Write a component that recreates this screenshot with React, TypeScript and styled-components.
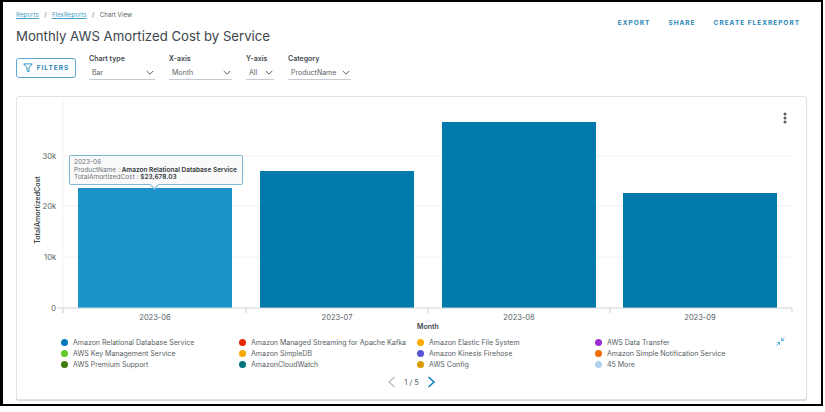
import React from "react"
import styled, { createGlobalStyle } from "styled-components"

const GlobalStyle = createGlobalStyle`
html, body {
    margin: 0;
    padding: 0;
    background: #ffffff;
}
body {
    font-family: Inter, "Liberation Sans", sans-serif;
    color: #444b50;
}
`

const selects = [
    { label: "Chart type", value: "Bar", width: 66 },
    { label: "X-axis", value: "Month", width: 63 },
    { label: "Y-axis", value: "All", width: 28 },
    { label: "Category", value: "ProductName", width: 63 },
]

const legend = [
    { color: "#0079b8", name: "Amazon Relational Database Service" },
    { color: "#e62700", name: "Amazon Managed Streaming for Apache Kafka" },
    { color: "#ffab00", name: "Amazon Elastic File System" },
    { color: "#9b2fce", name: "AWS Data Transfer" },
    { color: "#62c926", name: "AWS Key Management Service" },
    { color: "#f8a900", name: "Amazon SimpleDB" },
    { color: "#5a55d6", name: "Amazon Kinesis Firehose" },
    { color: "#f26a00", name: "Amazon Simple Notification Service" },
    { color: "#3f7a0a", name: "AWS Premium Support" },
    { color: "#00757f", name: "AmazonCloudWatch" },
    { color: "#d99a00", name: "AWS Config" },
    { color: "#b3d1ec", name: "45 More" },
]

const bars = [
    { month: "2023-06", x: 62, top: 91, color: "#1b93c9" },
    { month: "2023-07", x: 244, top: 74, color: "#0079ad" },
    { month: "2023-08", x: 426, top: 25, color: "#0079ad" },
    { month: "2023-09", x: 607, top: 96, color: "#0079ad" },
]

function Chevron() {
    return (
        <svg width="8" height="6" viewBox="0 0 8 6" fill="none">
            <path d="M.7.9L4 4.2 7.3.9" stroke="#565e64" strokeWidth="1" />
        </svg>
    )
}

function Chart() {
    return (
        <svg width="789" height="236" viewBox="1 0 789 236">
            {[59, 109, 160].map(y => (
                <line key={y} x1="47" x2="776" y1={y} y2={y} stroke="#f0f1f2" />
            ))}
            <line x1="47" x2="47" y1="3" y2="216" stroke="#f0f1f2" />
            {bars.map(b => (
                <rect key={b.month} x={b.x} y={b.top} width="154" height={211 - b.top} fill={b.color} />
            ))}
            <line x1="41" x2="776" y1="211" y2="211" stroke="#ccd3d8" />
            {[47, 230, 412, 594, 776].map(x => (
                <line key={x} x1={x} x2={x} y1="211" y2="216" stroke="#ccd3d8" />
            ))}
            <AxisText x="40" y="62" textAnchor="end">30k</AxisText>
            <AxisText x="40" y="112" textAnchor="end">20k</AxisText>
            <AxisText x="40" y="163" textAnchor="end">10k</AxisText>
            <AxisText x="40" y="214" textAnchor="end">0</AxisText>
            {bars.map(b => (
                <AxisText key={b.month} x={b.x + 77} y="223" textAnchor="middle">{b.month}</AxisText>
            ))}
            <AxisTitle x="412" y="232" textAnchor="middle">Month</AxisTitle>
            <AxisTitle x="24" y="113" textAnchor="middle" transform="rotate(-90 24 113)">TotalAmortizedCost</AxisTitle>
            <circle cx="769" cy="17" r="1.5" fill="#565e64" />
            <circle cx="769" cy="21" r="1.5" fill="#565e64" />
            <circle cx="769" cy="25" r="1.5" fill="#565e64" />
        </svg>
    )
}

export default function App() {
    return (
        <>
            <GlobalStyle />
            <Frame>
                <Header>
                    <div>
                        <Breadcrumb>
                            <Crumb>Reports</Crumb>
                            <span>/</span>
                            <Crumb>FlexReports</Crumb>
                            <span>/</span>
                            <span>Chart View</span>
                        </Breadcrumb>
                        <Title>Monthly AWS Amortized Cost by Service</Title>
                    </div>
                    <Actions>
                        <Action>EXPORT</Action>
                        <Action>SHARE</Action>
                        <Action>CREATE FLEXREPORT</Action>
                    </Actions>
                </Header>
                <Toolbar>
                    <FilterButton>
                        <svg width="10" height="10" viewBox="0 0 11 11" fill="none">
                            <path d="M.8 1h9.4L6.6 5.3v4.4L4.4 8.4V5.3L.8 1z" stroke="#0079b8" strokeWidth=".9" />
                        </svg>
                        FILTERS
                    </FilterButton>
                    {selects.map(s => (
                        <Field key={s.label}>
                            <FieldLabel>{s.label}</FieldLabel>
                            <Select $width={s.width}>
                                <span>{s.value}</span>
                                <Chevron />
                            </Select>
                        </Field>
                    ))}
                </Toolbar>
                <Card>
                    <Chart />
                    <Tooltip>
                        <TooltipLine>2023-06</TooltipLine>
                        <TooltipLine>ProductName : <b>Amazon Relational Database Service</b></TooltipLine>
                        <TooltipLine>TotalAmortizedCost : <b>$23,678.03</b></TooltipLine>
                    </Tooltip>
                    <LegendRow>
                        <Legend>
                            {legend.map(l => (
                                <LegendItem key={l.name}>
                                    <Dot $color={l.color} />
                                    {l.name}
                                </LegendItem>
                            ))}
                        </Legend>
                        <svg width="9" height="9" viewBox="0 0 9 9" fill="none">
                            <path d="M5.5 3.5L8.5.5M5.5 1v2.5H8M3.5 5.5l-3 3M1 5.5h2.5V8" stroke="#2f9fd0" strokeWidth=".8" />
                        </svg>
                    </LegendRow>
                    <Pager>
                        <svg width="9" height="12" viewBox="0 0 9 12" fill="none">
                            <path d="M7.5 1L2 6l5.5 5" stroke="#b4bbc0" strokeWidth="1.2" />
                        </svg>
                        <span>1 / 5</span>
                        <svg width="9" height="12" viewBox="0 0 9 12" fill="none">
                            <path d="M1.5 1L7 6l-5.5 5" stroke="#0079b8" strokeWidth="1.4" />
                        </svg>
                    </Pager>
                </Card>
            </Frame>
        </>
    )
}

const Frame = styled.div`
box-sizing: border-box;
width: 823px;
height: 406px;
border: 2px solid #000000;
border-left-width: 3px;
padding: 8px 14px 4px 13px;
display: flex;
flex-direction: column;
`

const Header = styled.div`
display: flex;
justify-content: space-between;
align-items: flex-start;
`

const Breadcrumb = styled.div`
display: flex;
gap: 5.5px;
font-size: 6.2px;
line-height: 10px;
color: #565e64;
`

const Crumb = styled.span`
color: #4a9fcb;
text-decoration: underline;
`

const Title = styled.h1`
margin: 6px 0 0;
font-size: 13.2px;
font-weight: 400;
line-height: 20px;
color: #3d464c;
`

const Actions = styled.div`
display: flex;
gap: 18px;
padding: 8px 7px 0 0;
`

const Action = styled.span`
font-size: 6.5px;
font-weight: 700;
letter-spacing: 1px;
line-height: 10px;
color: #2a86b5;
`

const Toolbar = styled.div`
display: flex;
align-items: flex-start;
margin-top: 7px;
height: 43px;
`

const FilterButton = styled.button`
box-sizing: border-box;
width: 60px;
height: 20px;
margin: 5px 13px 0 0;
padding: 0;
display: flex;
align-items: center;
justify-content: center;
gap: 4px;
background: #ffffff;
border: 1px solid #5aa9d1;
border-radius: 3px;
font-family: inherit;
font-size: 6.5px;
font-weight: 700;
letter-spacing: 1px;
color: #2a86b5;
`

const Field = styled.div`
display: flex;
flex-direction: column;
margin: 1px 14px 0 0;
`

const FieldLabel = styled.div`
font-size: 7px;
font-weight: 600;
line-height: 10px;
color: #444b50;
`

const Select = styled.div<{ $width: number }>`
box-sizing: border-box;
width: ${p => p.$width}px;
height: 15px;
margin-top: 1px;
padding: 1px 1px 0 3px;
display: flex;
align-items: center;
justify-content: space-between;
border-bottom: 1.5px solid #c5ccd1;
font-size: 7px;
color: #5c6469;
`

const Card = styled.div`
position: relative;
box-sizing: border-box;
flex: 1;
width: 791px;
background: #ffffff;
border: 1px solid #dfe3e6;
border-radius: 3px;
box-shadow: 0 1px 1px #d5d9dc;
`

const AxisText = styled.text`
font-size: 7.5px;
fill: #565e64;
`

const AxisTitle = styled.text`
font-size: 7px;
font-weight: 600;
fill: #3d464c;
`

const Tooltip = styled.div`
position: absolute;
left: 52px;
top: 58px;
box-sizing: border-box;
width: 174px;
height: 30px;
padding: 3px 4px;
background: #fafafa;
border: 1px solid #7cb9d8;
border-radius: 2px;
&::after {
    content: "";
    position: absolute;
    left: 81px;
    bottom: -4px;
    width: 6px;
    height: 6px;
    background: #fafafa;
    border-right: 1px solid #7cb9d8;
    border-bottom: 1px solid #7cb9d8;
    transform: rotate(45deg);
}
`

const TooltipLine = styled.div`
font-size: 6.5px;
line-height: 7.5px;
white-space: nowrap;
color: #6b7378;
b {
    font-weight: 600;
    color: #33393d;
}
`

const LegendRow = styled.div`
display: flex;
align-items: flex-start;
padding: 0 21px 0 44px;
justify-content: space-between;
`

const Legend = styled.div`
display: grid;
grid-template-columns: 178px 178px 178px 178px;
grid-auto-rows: 11px;
`

const LegendItem = styled.div`
display: flex;
align-items: center;
gap: 5px;
font-size: 7px;
white-space: nowrap;
color: #565e64;
`

const Dot = styled.span<{ $color: string }>`
width: 7px;
height: 7px;
border-radius: 50%;
background: ${p => p.$color};
`

const Pager = styled.div`
display: flex;
align-items: center;
justify-content: center;
gap: 8px;
margin-top: 6px;
font-size: 7.5px;
color: #565e64;
`
